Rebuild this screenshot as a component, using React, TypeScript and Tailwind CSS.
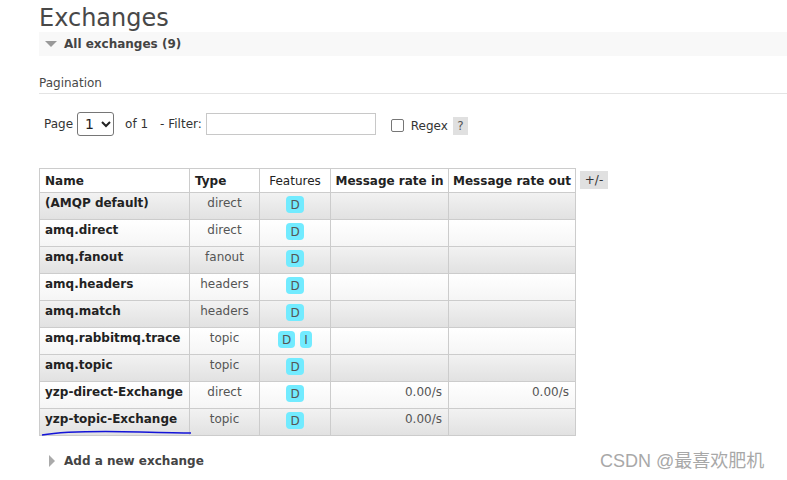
import React from 'react';

interface ExchangeRow {
  name: string;
  type: string;
  features: string[];
  rateIn?: string;
  rateOut?: string;
}

const rows: ExchangeRow[] = [
  { name: '(AMQP default)', type: 'direct', features: ['D'] },
  { name: 'amq.direct', type: 'direct', features: ['D'] },
  { name: 'amq.fanout', type: 'fanout', features: ['D'] },
  { name: 'amq.headers', type: 'headers', features: ['D'] },
  { name: 'amq.match', type: 'headers', features: ['D'] },
  { name: 'amq.rabbitmq.trace', type: 'topic', features: ['D', 'I'] },
  { name: 'amq.topic', type: 'topic', features: ['D'] },
  { name: 'yzp-direct-Exchange', type: 'direct', features: ['D'], rateIn: '0.00/s', rateOut: '0.00/s' },
  { name: 'yzp-topic-Exchange', type: 'topic', features: ['D'], rateIn: '0.00/s' },
];

const Badge: React.FC<{ label: string }> = ({ label }) => (
  <span className="inline-flex items-center justify-center h-[17px] px-[4px] rounded-[4px] bg-[#72ebff] text-[#555] text-[12px] leading-none">
    {label}
  </span>
);

const App: React.FC = () => {
  return (
    <div className="relative w-[787px] h-[480px] overflow-hidden bg-white font-['DejaVu_Sans',Verdana,sans-serif] text-[#484848]">
      <h1 className="pl-[39px] pt-[4px] text-[24px] leading-[28px] text-[#484848]">Exchanges</h1>

      <div className="ml-[39px] h-[24px] bg-[#f8f8f8] flex items-center">
        <svg width="12" height="8" viewBox="0 0 12 8" className="ml-[6px]">
          <polygon points="0,1 12,1 6,7" fill="#999" />
        </svg>
        <span className="ml-[7px] text-[12px] font-bold text-[#444]">All exchanges (9)</span>
      </div>

      <div className="ml-[39px] mt-[19px] border-b border-[#e4e4e4] pb-[2px] text-[12px] leading-[16px] text-[#484848]">
        Pagination
      </div>

      <div className="ml-[44px] mt-[18px] flex items-center text-[12px] text-[#333]">
        <span>Page</span>
        <div className="ml-[4px] w-[37px] h-[24px] border border-[#767676] rounded-[3px] flex items-center pl-[7px] text-[14px] text-[#222]">
          <span>1</span>
          <svg width="10" height="7" viewBox="0 0 10 7" className="ml-[7px]">
            <polyline points="1,1 5,5 9,1" fill="none" stroke="#222" strokeWidth="2" />
          </svg>
        </div>
        <span className="ml-[11px]">of 1</span>
        <span className="ml-[12px]">- Filter:</span>
        <div className="ml-[4px] w-[170px] h-[22px] border border-[#c8c8c8]" />
        <div className="ml-[15px] w-[13px] h-[13px] border border-[#767676] rounded-[2px] mt-[3px]" />
        <span className="ml-[7px] mt-[4px]">Regex</span>
        <span className="ml-[5px] mt-[4px] w-[15px] h-[18px] bg-[#e0e0e0] text-[#555] flex items-center justify-center">?</span>
      </div>

      <div className="ml-[39px] mt-[32px] flex items-start">
        <table className="table-fixed w-[536px] border-collapse text-[12px] text-[#222] whitespace-nowrap">
          <colgroup>
            <col className="w-[150px]" />
            <col className="w-[70px]" />
            <col className="w-[71px]" />
            <col className="w-[118px]" />
            <col className="w-[127px]" />
          </colgroup>
          <thead>
            <tr className="h-[24px] bg-white">
              <th className="border border-[#ccc] px-[5px] text-left font-bold">Name</th>
              <th className="border border-[#ccc] px-[5px] text-left font-bold">Type</th>
              <th className="border border-[#ccc] px-[2px] text-center font-normal">Features</th>
              <th className="border border-[#ccc] px-[2px] text-center font-bold">Message rate in</th>
              <th className="border border-[#ccc] px-[2px] text-center font-bold">Message rate out</th>
            </tr>
          </thead>
          <tbody>
            {rows.map((row, i) => (
              <tr
                key={row.name}
                className={`h-[27px] ${
                  i % 2 === 0
                    ? 'bg-linear-to-b from-[#f2f2f2] to-[#e1e1e1]'
                    : 'bg-linear-to-b from-[#ffffff] to-[#f5f5f5]'
                }`}
              >
                <td className="border border-[#ccc] px-[5px] pt-[2px] align-top font-bold leading-[16px]">{row.name}</td>
                <td className="border border-[#ccc] px-[5px] pt-[2px] align-top text-center text-[#555] leading-[16px]">{row.type}</td>
                <td className="border border-[#ccc] px-[5px] pt-[3px] align-top text-center leading-none">
                  <span className="inline-flex gap-[5px]">
                    {row.features.map(f => (
                      <Badge key={f} label={f} />
                    ))}
                  </span>
                </td>
                <td className="border border-[#ccc] px-[6px] pt-[2px] align-top text-right text-[#555] leading-[16px]">{row.rateIn}</td>
                <td className="border border-[#ccc] px-[6px] pt-[2px] align-top text-right text-[#555] leading-[16px]">{row.rateOut}</td>
              </tr>
            ))}
          </tbody>
        </table>
        <span className="ml-[4px] mt-[3px] w-[28px] h-[18px] bg-[#e0e0e0] text-[12px] text-[#333] flex items-center justify-center">+/-</span>
      </div>

      <div className="ml-[48px] mt-[16px] flex items-center">
        <svg width="7" height="12" viewBox="0 0 7 12">
          <polygon points="1,0 7,6 1,12" fill="#aaa" />
        </svg>
        <span className="ml-[9px] text-[12px] font-bold text-[#444]">Add a new exchange</span>
      </div>

      <svg className="absolute left-[40px] top-[428px]" width="154" height="10" viewBox="0 0 154 10">
        <path d="M2 7 C 20 4, 60 3, 100 4 S 140 5, 151 5" fill="none" stroke="#1414d8" strokeWidth="1.6" />
      </svg>

      <div className="absolute left-[600px] top-[450px] text-[18px] leading-[22px] text-[#a8a8a8] font-['Liberation_Sans','Noto_Sans_CJK_SC',sans-serif]">
        CSDN @最喜欢肥机
      </div>
    </div>
  );
};

export default App;
